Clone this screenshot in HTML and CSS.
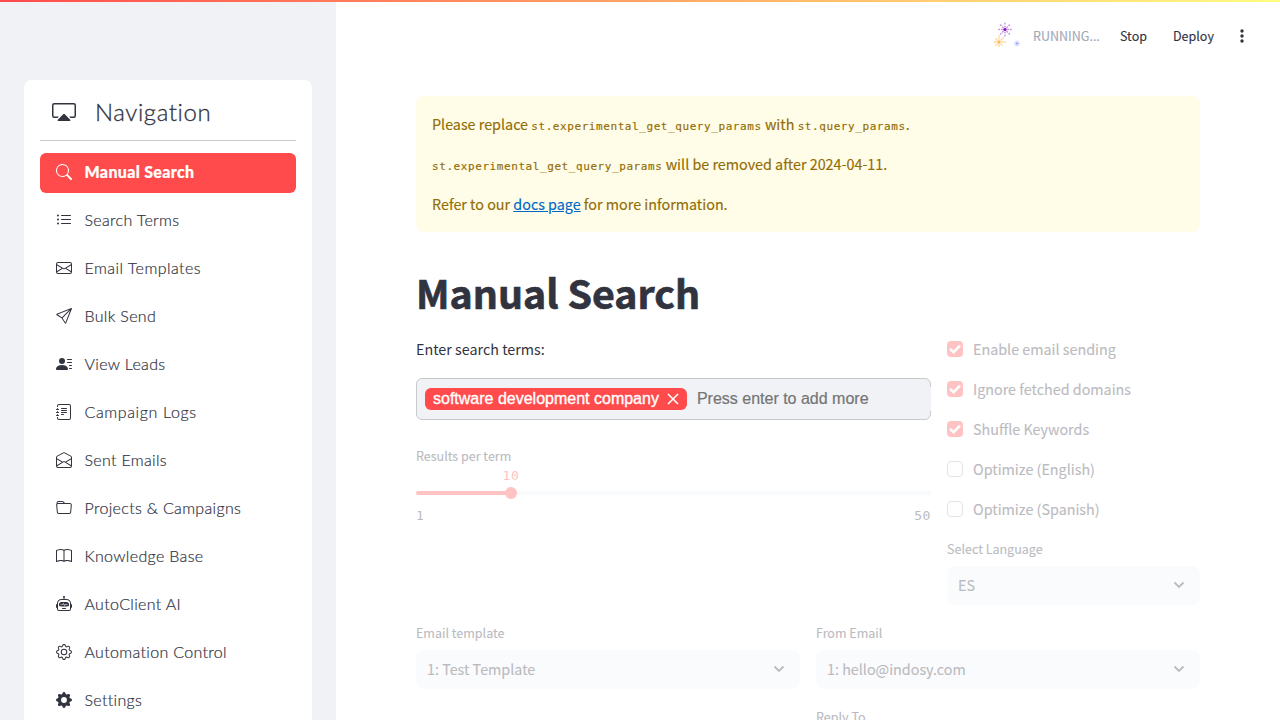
FILE: index.html
```html
<!DOCTYPE html>
<html lang="en">
<head>
<meta charset="utf-8">
<title>Manual Search</title>
<link rel="stylesheet" href="styles.css">
</head>
<body>
<div class="decoration"></div>
<div class="app">
  <aside class="sidebar">
    <nav class="menu">
      <div class="menu-title">
        <svg class="cast" viewBox="0 0 16 16"><path d="m7.646 9.354-3.792 3.792a.5.5 0 0 0 .353.854h7.586a.5.5 0 0 0 .354-.854L8.354 9.354a.5.5 0 0 0-.708 0z"/><path d="M11.414 11H14.5a.5.5 0 0 0 .5-.5v-7a.5.5 0 0 0-.5-.5h-13a.5.5 0 0 0-.5.5v7a.5.5 0 0 0 .5.5h3.086l-1 1H1.5A1.5 1.5 0 0 1 0 10.5v-7A1.5 1.5 0 0 1 1.5 2h13A1.5 1.5 0 0 1 16 3.5v7a1.5 1.5 0 0 1-1.5 1.5h-2.086l-1-1z"/></svg>
        <span>Navigation</span>
      </div>
      <ul class="menu-list">
        <li class="item active"><svg class="icon" viewBox="0 0 16 16"><path d="M11.742 10.344a6.5 6.5 0 1 0-1.397 1.398h-.001c.03.04.062.078.098.115l3.85 3.85a1 1 0 0 0 1.415-1.414l-3.85-3.85a1.007 1.007 0 0 0-.115-.1zM12 6.5a5.5 5.5 0 1 1-11 0 5.5 5.5 0 0 1 11 0z"/></svg><span>Manual Search</span></li>
        <li class="item"><svg class="icon" viewBox="0 0 16 16"><path d="M5 11.5a.5.5 0 0 1 .5-.5h9a.5.5 0 0 1 0 1h-9a.5.5 0 0 1-.5-.5zm0-4a.5.5 0 0 1 .5-.5h9a.5.5 0 0 1 0 1h-9a.5.5 0 0 1-.5-.5zm0-4a.5.5 0 0 1 .5-.5h9a.5.5 0 0 1 0 1h-9a.5.5 0 0 1-.5-.5zm-3 1a1 1 0 1 0 0-2 1 1 0 0 0 0 2zm0 4a1 1 0 1 0 0-2 1 1 0 0 0 0 2zm0 4a1 1 0 1 0 0-2 1 1 0 0 0 0 2z"/></svg><span>Search Terms</span></li>
        <li class="item wide"><svg class="icon" viewBox="0 0 16 16"><path d="M0 4a2 2 0 0 1 2-2h12a2 2 0 0 1 2 2v8a2 2 0 0 1-2 2H2a2 2 0 0 1-2-2V4Zm2-1a1 1 0 0 0-1 1v.217l7 4.2 7-4.2V4a1 1 0 0 0-1-1H2Zm13 2.383-4.708 2.825L15 11.105V5.383Zm-.034 6.876-5.64-3.471L8 9.583l-1.326-.795-5.64 3.47A1 1 0 0 0 2 13h12a1 1 0 0 0 .966-.741ZM1 11.105l4.708-2.897L1 5.383v5.722Z"/></svg><span>Email Templates</span></li>
        <li class="item"><svg class="icon" viewBox="0 0 16 16"><path d="M15.854.146a.5.5 0 0 1 .11.54l-5.819 14.547a.75.75 0 0 1-1.329.124l-3.178-4.995L.643 7.184a.75.75 0 0 1 .124-1.33L15.314.037a.5.5 0 0 1 .54.11ZM6.636 10.07l2.761 4.338L14.13 2.576 6.636 10.07Zm6.787-8.201L1.591 6.602l4.339 2.76 7.494-7.493Z"/></svg><span>Bulk Send</span></li>
        <li class="item"><svg class="icon" viewBox="0 0 16 16"><path d="M6 8a3 3 0 1 0 0-6 3 3 0 0 0 0 6zm-5 6s-1 0-1-1 1-4 6-4 6 3 6 4-1 1-1 1H1zM11 3.5a.5.5 0 0 1 .5-.5h4a.5.5 0 0 1 0 1h-4a.5.5 0 0 1-.5-.5zm.5 2.5a.5.5 0 0 0 0 1h4a.5.5 0 0 0 0-1h-4zm2 3a.5.5 0 0 0 0 1h2a.5.5 0 0 0 0-1h-2zm0 3a.5.5 0 0 0 0 1h2a.5.5 0 0 0 0-1h-2z"/></svg><span>View Leads</span></li>
        <li class="item widest"><svg class="icon" viewBox="0 0 16 16"><path d="M5 10.5a.5.5 0 0 1 .5-.5h2a.5.5 0 0 1 0 1h-2a.5.5 0 0 1-.5-.5zm0-2a.5.5 0 0 1 .5-.5h5a.5.5 0 0 1 0 1h-5a.5.5 0 0 1-.5-.5zm0-2a.5.5 0 0 1 .5-.5h5a.5.5 0 0 1 0 1h-5a.5.5 0 0 1-.5-.5zm0-2a.5.5 0 0 1 .5-.5h5a.5.5 0 0 1 0 1h-5a.5.5 0 0 1-.5-.5z"/><path d="M3 0h10a2 2 0 0 1 2 2v12a2 2 0 0 1-2 2H3a2 2 0 0 1-2-2v-1h1v1a1 1 0 0 0 1 1h10a1 1 0 0 0 1-1V2a1 1 0 0 0-1-1H3a1 1 0 0 0-1 1v1H1V2a2 2 0 0 1 2-2z"/><path d="M1 5v-.5a.5.5 0 0 1 1 0V5h.5a.5.5 0 0 1 0 1h-2a.5.5 0 0 1 0-1H1zm0 3v-.5a.5.5 0 0 1 1 0V8h.5a.5.5 0 0 1 0 1h-2a.5.5 0 0 1 0-1H1zm0 3v-.5a.5.5 0 0 1 1 0v.5h.5a.5.5 0 0 1 0 1h-2a.5.5 0 0 1 0-1H1z"/></svg><span>Campaign Logs</span></li>
        <li class="item"><svg class="icon" viewBox="0 0 16 16"><path d="M8.47 1.318a1 1 0 0 0-.94 0l-6 3.2A1 1 0 0 0 1 5.4v.817l5.75 3.45L8 8.917l1.25.75L15 6.217V5.4a1 1 0 0 0-.53-.882l-6-3.2ZM15 7.383l-4.778 2.867L15 13.117V7.383Zm-.035 6.88L8 10.082l-6.965 4.18A1 1 0 0 0 2 15h12a1 1 0 0 0 .965-.738ZM1 13.116l4.778-2.867L1 7.383v5.734ZM7.059.435a2 2 0 0 1 1.882 0l6 3.2A2 2 0 0 1 16 5.4V14a2 2 0 0 1-2 2H2a2 2 0 0 1-2-2V5.4a2 2 0 0 1 1.059-1.765l6-3.2Z"/></svg><span>Sent Emails</span></li>
        <li class="item"><svg class="icon" viewBox="0 0 16 16"><path d="M.54 3.87.5 3a2 2 0 0 1 2-2h3.672a2 2 0 0 1 1.414.586l.828.828A2 2 0 0 0 9.828 3h3.982a2 2 0 0 1 1.992 2.181l-.637 7A2 2 0 0 1 13.174 14H2.826a2 2 0 0 1-1.991-1.819l-.637-7a1.99 1.99 0 0 1 .342-1.31zM2.19 4a1 1 0 0 0-.996 1.09l.637 7a1 1 0 0 0 .995.91h10.348a1 1 0 0 0 .995-.91l.637-7A1 1 0 0 0 13.81 4H2.19zm4.69-1.707A1 1 0 0 0 6.172 2H2.5a1 1 0 0 0-1 .981l.006.139C1.72 3.042 1.95 3 2.19 3h5.396l-.707-.707z"/></svg><span>Projects &amp; Campaigns</span></li>
        <li class="item"><svg class="icon" viewBox="0 0 16 16"><path d="M1 2.828c.885-.37 2.154-.769 3.388-.893 1.33-.134 2.458.063 3.112.752v9.746c-.935-.53-2.12-.603-3.213-.493-1.18.12-2.37.461-3.287.811V2.828zm7.5-.141c.654-.689 1.782-.886 3.112-.752 1.234.124 2.503.523 3.388.893v9.923c-.918-.35-2.107-.692-3.287-.81-1.094-.111-2.278-.039-3.213.492V2.687zM8 1.783C7.015.936 5.587.81 4.287.94c-1.514.153-3.042.672-3.994 1.105A.5.5 0 0 0 0 2.5v11a.5.5 0 0 0 .707.455c.882-.4 2.303-.881 3.68-1.02 1.409-.142 2.59.087 3.223.877a.5.5 0 0 0 .78 0c.633-.79 1.814-1.019 3.222-.877 1.378.139 2.8.62 3.681 1.02A.5.5 0 0 0 16 13.5v-11a.5.5 0 0 0-.293-.455c-.952-.433-2.48-.952-3.994-1.105C10.413.809 8.985.936 8 1.783z"/></svg><span>Knowledge Base</span></li>
        <li class="item"><svg class="icon" viewBox="0 0 16 16"><path d="M6 12.5a.5.5 0 0 1 .5-.5h3a.5.5 0 0 1 0 1h-3a.5.5 0 0 1-.5-.5ZM3 8.062C3 6.76 4.235 5.765 5.53 5.886a26.58 26.58 0 0 0 4.94 0C11.765 5.765 13 6.76 13 8.062v1.157a.933.933 0 0 1-.765.935c-.845.147-2.34.346-4.235.346-1.895 0-3.39-.2-4.235-.346A.933.933 0 0 1 3 9.219V8.062Zm4.542-.827a.25.25 0 0 0-.217.068l-.92.9a24.767 24.767 0 0 1-1.871-.183.25.25 0 0 0-.068.495c.55.076 1.232.149 2.02.193a.25.25 0 0 0 .189-.071l.754-.736.847 1.71a.25.25 0 0 0 .404.062l.932-.97a25.286 25.286 0 0 0 1.922-.188.25.25 0 0 0-.068-.495c-.538.074-1.207.145-1.98.189a.25.25 0 0 0-.166.076l-.754.785-.842-1.7a.25.25 0 0 0-.182-.135Z"/><path d="M8.5 1.866a1 1 0 1 0-1 0V3h-2A4.5 4.5 0 0 0 1 7.5V8a1 1 0 0 0-1 1v2a1 1 0 0 0 1 1v1a2 2 0 0 0 2 2h10a2 2 0 0 0 2-2v-1a1 1 0 0 0 1-1V9a1 1 0 0 0-1-1v-.5A4.5 4.5 0 0 0 10.5 3h-2V1.866ZM14 7.5V13a1 1 0 0 1-1 1H3a1 1 0 0 1-1-1V7.5A3.5 3.5 0 0 1 5.5 4h5A3.5 3.5 0 0 1 14 7.5Z"/></svg><span>AutoClient AI</span></li>
        <li class="item"><svg class="icon" viewBox="0 0 16 16"><path d="M8 4.754a3.246 3.246 0 1 0 0 6.492 3.246 3.246 0 0 0 0-6.492zM5.754 8a2.246 2.246 0 1 1 4.492 0 2.246 2.246 0 0 1-4.492 0z"/><path d="M9.796 1.343c-.527-1.79-3.065-1.79-3.592 0l-.094.319a.873.873 0 0 1-1.255.52l-.292-.16c-1.64-.892-3.433.902-2.54 2.541l.159.292a.873.873 0 0 1-.52 1.255l-.319.094c-1.79.527-1.79 3.065 0 3.592l.319.094a.873.873 0 0 1 .52 1.255l-.16.292c-.892 1.64.901 3.434 2.541 2.54l.292-.159a.873.873 0 0 1 1.255.52l.094.319c.527 1.79 3.065 1.79 3.592 0l.094-.319a.873.873 0 0 1 1.255-.52l.292.16c1.64.893 3.434-.902 2.54-2.541l-.159-.292a.873.873 0 0 1 .52-1.255l.319-.094c1.79-.527 1.79-3.065 0-3.592l-.319-.094a.873.873 0 0 1-.52-1.255l.16-.292c.893-1.64-.902-3.433-2.541-2.54l-.292.159a.873.873 0 0 1-1.255-.52l-.094-.319zm-2.633.283c.246-.835 1.428-.835 1.674 0l.094.319a1.873 1.873 0 0 0 2.693 1.115l.291-.16c.764-.415 1.6.42 1.184 1.185l-.159.292a1.873 1.873 0 0 0 1.116 2.692l.318.094c.835.246.835 1.428 0 1.674l-.319.094a1.873 1.873 0 0 0-1.115 2.693l.16.291c.415.764-.42 1.6-1.185 1.184l-.291-.159a1.873 1.873 0 0 0-2.693 1.116l-.094.318c-.246.835-1.428.835-1.674 0l-.094-.319a1.873 1.873 0 0 0-2.692-1.115l-.292.16c-.764.415-1.6-.42-1.184-1.185l.159-.291A1.873 1.873 0 0 0 1.945 8.93l-.319-.094c-.835-.246-.835-1.428 0-1.674l.319-.094A1.873 1.873 0 0 0 3.06 4.377l-.16-.292c-.415-.764.42-1.6 1.185-1.184l.292.159a1.873 1.873 0 0 0 2.692-1.115l.094-.319z"/></svg><span>Automation Control</span></li>
        <li class="item"><svg class="icon" viewBox="0 0 16 16"><path d="M9.405 1.05c-.413-1.4-2.397-1.4-2.81 0l-.1.34a1.464 1.464 0 0 1-2.105.872l-.31-.17c-1.283-.698-2.686.705-1.987 1.987l.169.311c.446.82.023 1.841-.872 2.105l-.34.1c-1.4.413-1.4 2.397 0 2.81l.34.1a1.464 1.464 0 0 1 .872 2.105l-.17.31c-.698 1.283.705 2.686 1.987 1.987l.311-.169a1.464 1.464 0 0 1 2.105.872l.1.34c.413 1.4 2.397 1.4 2.81 0l.1-.34a1.464 1.464 0 0 1 2.105-.872l.31.17c1.283.698 2.686-.705 1.987-1.987l-.169-.311a1.464 1.464 0 0 1 .872-2.105l.34-.1c1.4-.413 1.4-2.397 0-2.81l-.34-.1a1.464 1.464 0 0 1-.872-2.105l.17-.31c.698-1.283-.705-2.686-1.987-1.987l-.311.169a1.464 1.464 0 0 1-2.105-.872l-.1-.34zM8 10.93a2.929 2.929 0 1 1 0-5.86 2.929 2.929 0 0 1 0 5.858z"/></svg><span>Settings</span></li>
      </ul>
    </nav>
  </aside>
  <div class="page">
    <header class="toolbar">
      <svg class="fireworks" viewBox="0 0 28 28">
        <g fill="none" stroke-linecap="round">
          <g stroke="#c58bdc" stroke-width="1.4" stroke-dasharray=".6 2.2"><path d="M12 7.500V1M12 7.500V14M12 7.500H5.500M12 7.500H18.500M12 7.500L7.500 3M12 7.500L16.500 3M12 7.500L7.500 12M12 7.500L16.500 12"/></g>
          <g stroke="#ffd08a" stroke-width="1.300" stroke-dasharray="1.400 1.600"><path d="M6 20V13.500M6 20V26M6 20H0M6 20H12.500M6 20L2 16M6 20L10.500 15.500M6 20L2 24M6 20L10 24"/></g>
          <g stroke="#d0d9fc" stroke-width="1.200" stroke-dasharray=".8 1"><path d="M24 21.500V18.500M24 21.500V24.500M24 21.500H21M24 21.500H27M24 21.500L22 19.500M24 21.500L26 19.500M24 21.500L22 23.500M24 21.500L26 23.500"/></g>
        </g>
        <circle cx="12" cy="7.500" r="1.700" fill="#8a1fc4"/><circle cx="6" cy="20" r="1.200" fill="#ffb85c"/><circle cx="24" cy="21.500" r="1" fill="#8ea2f3"/>
      </svg>
      <span class="running">RUNNING...</span>
      <span class="stop">Stop</span>
      <span class="deploy">Deploy</span>
      <svg class="kebab" viewBox="0 0 4 14"><circle cx="2" cy="2" r="1.700"/><circle cx="2" cy="7" r="1.700"/><circle cx="2" cy="12" r="1.700"/></svg>
    </header>
    <main class="content">
      <div class="alert">
        <p>Please replace <code>st.experimental_get_query_params</code> with <code>st.query_params</code>.</p>
        <p><code>st.experimental_get_query_params</code> will be removed after 2024-04-11.</p>
        <p>Refer to our <a href="#">docs page</a> for more information.</p>
      </div>
      <h1>Manual Search</h1>
      <div class="search-row">
        <section>
          <p>Enter search terms:</p>
          <div class="tags">
            <span class="tag"><span>software development company</span><svg class="close" viewBox="0 0 12 12"><path d="M1 1l10 10M11 1L1 11"/></svg></span>
            <span class="placeholder">Press enter to add more</span>
          </div>
          <div class="slider">
            <div class="label">Results per term</div>
            <div class="value">10</div>
            <div class="track"><div class="fill"></div><div class="thumb"></div></div>
            <div class="range"><span>1</span><span>50</span></div>
          </div>
        </section>
        <section class="right">
          <label class="check on"><i class="box"><svg viewBox="0 0 16 16"><path d="M3 7.800L6.600 11.200L13 4.600"/></svg></i><span>Enable email sending</span></label>
          <label class="check on"><i class="box"><svg viewBox="0 0 16 16"><path d="M3 7.800L6.600 11.200L13 4.600"/></svg></i><span>Ignore fetched domains</span></label>
          <label class="check on"><i class="box"><svg viewBox="0 0 16 16"><path d="M3 7.800L6.600 11.200L13 4.600"/></svg></i><span>Shuffle Keywords</span></label>
          <label class="check"><i class="box"></i><span>Optimize (English)</span></label>
          <label class="check"><i class="box"></i><span>Optimize (Spanish)</span></label>
          <div class="field"><div class="label">Select Language</div><div class="select"><span>ES</span><svg class="chev" viewBox="0 0 12 8"><path d="M1.500 1.500L6 6L10.500 1.500"/></svg></div></div>
        </section>
      </div>
      <div class="form-row">
        <div class="field"><div class="label">Email template</div><div class="select"><span>1: Test Template</span><svg class="chev" viewBox="0 0 12 8"><path d="M1.500 1.500L6 6L10.500 1.500"/></svg></div></div>
        <div>
          <div class="field"><div class="label">From Email</div><div class="select"><span>1: hello@indosy.com</span><svg class="chev" viewBox="0 0 12 8"><path d="M1.500 1.500L6 6L10.500 1.500"/></svg></div></div>
          <div class="field reply"><div class="label">Reply To</div></div>
        </div>
      </div>
    </main>
  </div>
</div>
</body>
</html>
```
FILE: styles.css
```css
* { box-sizing: border-box; }
body {
  margin: 0;
  height: 720px;
  overflow: hidden;
  background: #fff;
  color: #31333f;
  font-family: "Noto Sans CJK SC", "Noto Sans", sans-serif;
  font-size: 14.33px;
  line-height: 24px;
}
p, ul, h1 { margin: 0; padding: 0; }
.decoration {
  position: absolute;
  inset: 0 0 auto;
  height: 2px;
  background: linear-gradient(90deg, #ff4b4b, #fffd80);
}
.app { display: flex; height: 720px; overflow: hidden; }

/* Sidebar */
.sidebar { flex: 0 0 336px; padding: 80px 24px 0; background: #f0f2f6; }
.menu { height: 700px; padding: 16px; border-radius: 8px; background: #fff; font-family: Lato, sans-serif; font-variant-ligatures: none; }
.menu-title {
  display: flex;
  align-items: center;
  gap: 19px;
  height: 45px;
  padding: 0 12px 12px;
  border-bottom: 1px solid #c8c9cc;
  font-size: 24px;
  font-weight: 300;
  letter-spacing: 0.58px;
  -webkit-text-stroke: 0.3px currentColor;
}
.cast { width: 24px; height: 24px; fill: currentColor; }
.menu-list { display: flex; flex-direction: column; gap: 8px; margin-top: 12px; list-style: none; }
.item {
  display: flex;
  align-items: center;
  gap: 12.5px;
  height: 40px;
  padding: 0 16px 2px;
  border-radius: 6px;
  font-size: 16px;
  font-weight: 300;
  letter-spacing: 0.33px;
  -webkit-text-stroke: 0.2px currentColor;
}
.item.wide { letter-spacing: 0.46px; }
.item.widest { letter-spacing: 0.62px; }
.item.active { background: #ff4b4b; color: #fff; font-weight: 900; }
.icon { width: 16px; height: 16px; fill: currentColor; }

/* Toolbar */
.page { flex: 1; min-width: 0; }
.toolbar { display: flex; align-items: center; height: 72px; padding-left: 657px; font-size: 12.53px; -webkit-text-stroke: 0.12px currentColor; }
.fireworks { flex: none; width: 28px; height: 28px; }
.running { box-sizing: content-box; flex: none; width: 87px; padding-left: 12px; color: #a3a8b8; -webkit-text-stroke: 0.12px #a3a8b8; }
.stop { flex: none; width: 53px; }
.deploy { flex: none; width: 67px; }
.kebab { flex: none; width: 4px; height: 14px; fill: currentColor; }

/* Main column */
.content { padding: 24px 80px 0; }
.alert { display: flex; flex-direction: column; gap: 16px; height: 136px; padding: 16px; border-radius: 8px; background: #fffce7; color: #926c05; -webkit-text-stroke: 0.15px #926c05; }
.alert p { height: 24px; }
.alert a { color: #0068c9; text-decoration: underline; -webkit-text-stroke: 0.15px #0068c9; }
code { font-family: "DejaVu Sans Mono", monospace; font-size: 11px; letter-spacing: 0.578px; }
h1 { height: 56px; margin-top: 33px; font-size: 39.3px; line-height: 53px; font-weight: 700; -webkit-text-stroke: 0.7px currentColor; }
.search-row { display: grid; grid-template-columns: 515px 253px; gap: 16px; margin-top: 16px; }

/* Tag input */
.tags {
  position: relative;
  display: flex;
  align-items: center;
  gap: 10px;
  height: 42px;
  margin-top: 17px;
  padding: 0 8px;
  border: 1px solid #c8c9cc;
  border-radius: 6px;
  background: #f0f2f6;
  font-family: "Liberation Sans", Arial, sans-serif;
  font-size: 16px;
}
.tags::after { content: ""; position: absolute; right: -1px; top: 8px; bottom: 8px; width: 1px; background: #f0f2f6; }
.tag { display: flex; align-items: center; gap: 8px; height: 22px; padding: 0 8px; border-radius: 6px; background: #ff4b4b; color: #fff; -webkit-text-stroke: 0.35px #fff; }
.close { width: 12px; height: 12px; fill: none; stroke: #fff; stroke-width: 1.6; }
.placeholder { color: #757575; -webkit-text-stroke: 0.2px #757575; }

/* Slider */
.slider { margin-top: 24px; color: #bbbbbf; }
.label { height: 24px; font-size: 12.53px; color: #bbbbbf; -webkit-text-stroke: 0.1px #bbbbbf; }
.value, .range { font-family: "DejaVu Sans Mono", monospace; font-size: 13px; letter-spacing: 0.57px; }
.value { width: 24px; height: 14px; margin-left: 83px; text-align: center; line-height: 15px; color: #ffc3c3; }
.track { display: flex; align-items: center; height: 12px; margin-top: 5px; background: linear-gradient(#f9fafb, #f9fafb) center / 100% 4px no-repeat; }
.fill { width: 89.5px; height: 4px; border-radius: 2px 0 0 2px; background: #ffc3c3; }
.thumb { width: 12px; height: 12px; margin-left: -1px; border-radius: 50%; background: #ffc3c3; }
.range { display: flex; justify-content: space-between; margin-top: 5px; line-height: 23px; }

/* Checkboxes and selects */
.right { display: flex; flex-direction: column; }
.check { display: flex; align-items: center; gap: 10px; height: 24px; margin-bottom: 16px; color: #bbbbbf; -webkit-text-stroke: 0.12px #bbbbbf; }
.box { width: 16px; height: 16px; border: 1px solid #e3e3e6; border-radius: 4px; }
.on .box { border: 0; background: #ffc3c3; }
.box svg { display: block; width: 16px; height: 16px; fill: none; stroke: #fff; stroke-width: 2.5; }
.select {
  display: flex;
  align-items: center;
  justify-content: space-between;
  height: 39px;
  margin-top: 5px;
  padding: 0 15px 2px 11px;
  border-radius: 8px;
  background: #fafbfd;
  color: #bbbbbf;
  -webkit-text-stroke: 0.12px #bbbbbf;
}
.chev { width: 12px; height: 8px; fill: none; stroke: #bbbbbf; stroke-width: 1.8; }
.form-row { display: grid; grid-template-columns: 384px 384px; gap: 16px; margin-top: 16px; }
.reply { margin-top: 16px; }
```
